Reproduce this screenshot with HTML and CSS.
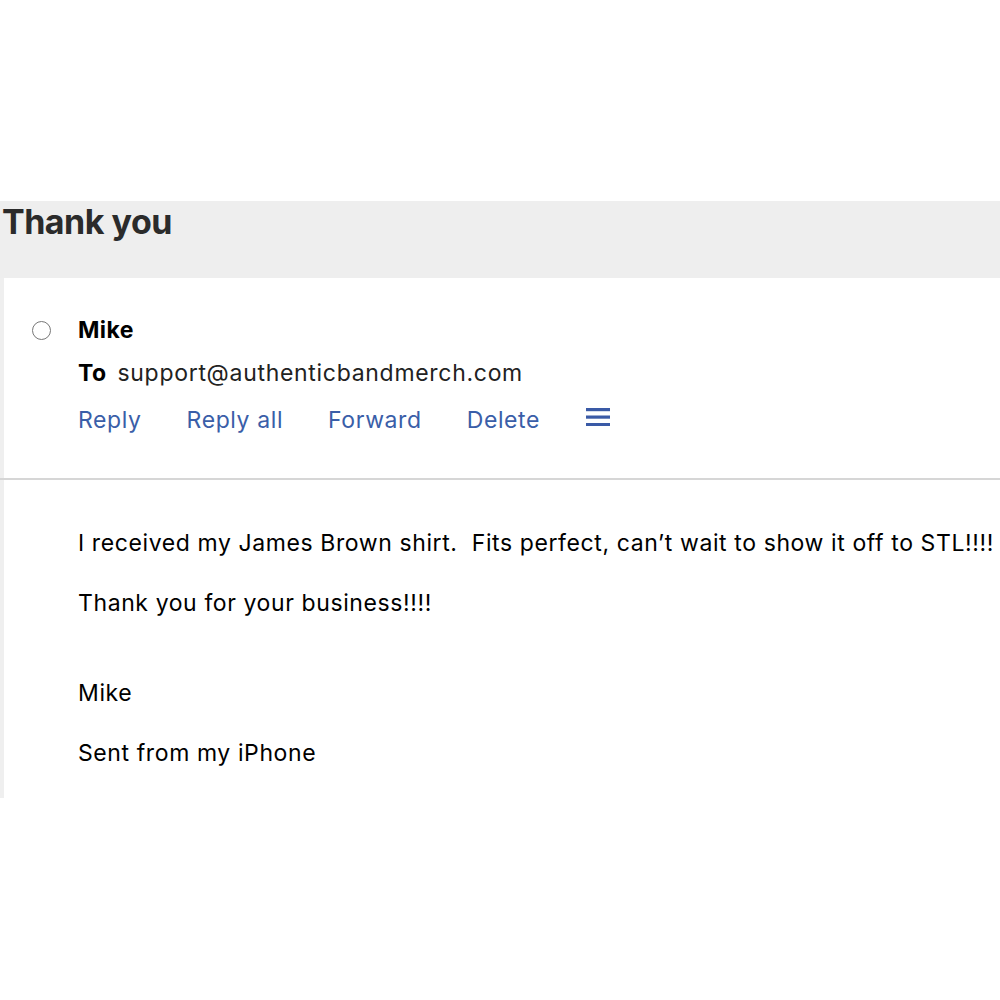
FILE: index.html
```html
<!DOCTYPE html>
<html>
<head>
<meta charset="utf-8">
<link rel="stylesheet" href="styles.css">
</head>
<body>
<div class="page">
  <div class="subject-bar"><h1 class="subject">Thank you</h1></div>
  <div class="pane">
    <div class="msg-head">
      <div class="sender-row">
        <span class="radio"></span>
        <span class="sender">Mike</span>
      </div>
      <div class="to-row"><span class="to-label">To</span><span class="to-addr">support@authenticbandmerch.com</span></div>
      <div class="actions">
        <span class="action">Reply</span>
        <span class="action">Reply all</span>
        <span class="action">Forward</span>
        <span class="action">Delete</span>
        <svg class="menu" width="24" height="20" viewBox="0 0 24 20"><rect x="0" y="2" width="24" height="3.2" fill="#3a5aa6"/><rect x="0" y="9.5" width="24" height="3.2" fill="#3a5aa6"/><rect x="0" y="17" width="24" height="3.2" fill="#3a5aa6"/></svg>
      </div>
    </div>
    <div class="msg-body">
      <p class="line">I received my James Brown shirt.&nbsp; Fits perfect, can’t wait to show it off to STL!!!!</p>
      <p class="line">Thank you for your business!!!!</p>
      <p class="line gap">Mike</p>
      <p class="line">Sent from my iPhone</p>
    </div>
  </div>
</div>
</body>
</html>
```
FILE: styles.css
```css
html, body {
  margin: 0;
  padding: 0;
  background: #ffffff;
}
body {
  font-family: Inter, "Liberation Sans", Arial, sans-serif;
  color: #000;
}
.page {
  padding-top: 201px;
}
.subject-bar {
  background: #eeeeee;
  height: 77px;
  padding-left: 2px;
  box-sizing: border-box;
}
.subject {
  margin: 0;
  padding-top: 1px;
  font-size: 34px;
  font-weight: 700;
  color: #2b2b2b;
  letter-spacing: -0.5px;
  line-height: 40px;
}
.pane {
  border-left: 4px solid #efefef;
  height: 520px;
  box-sizing: border-box;
}
.msg-head {
  height: 202px;
  box-sizing: border-box;
  border-bottom: 2px solid #d6d6d6;
  padding-top: 38px;
  margin-left: -4px;
  padding-left: 4px;
}
.sender-row {
  display: flex;
  align-items: center;
  height: 28px;
}
.radio {
  width: 19px;
  height: 19px;
  border: 1.5px solid #777;
  border-radius: 50%;
  margin-left: 28px;
  margin-right: 27px;
  box-sizing: border-box;
}
.sender {
  font-size: 23px;
  font-weight: 700;
  line-height: 28px;
  letter-spacing: 0.4px;
}
.to-row {
  margin-left: 74px;
  margin-top: 15px;
  font-size: 23px;
  line-height: 28px;
  color: #222;
  letter-spacing: 0.7px;
}
.to-label {
  font-weight: 700;
  color: #000;
  margin-right: 11px;
  letter-spacing: 0.4px;
}
.actions {
  margin-left: 74px;
  margin-top: 19px;
  display: flex;
  align-items: center;
  gap: 45px;
}
.action {
  font-size: 23px;
  line-height: 28px;
  color: #3a5ea8;
  letter-spacing: 0.6px;
}
.menu {
  margin-left: 1px;
  margin-top: -8px;
}
.msg-body {
  padding-top: 49px;
  padding-left: 74px;
}
.line {
  margin: 0 0 32px 0;
  font-size: 23px;
  line-height: 28px;
  white-space: nowrap;
  letter-spacing: 0.6px;
}
.line.gap {
  margin-top: 62px;
}
```
